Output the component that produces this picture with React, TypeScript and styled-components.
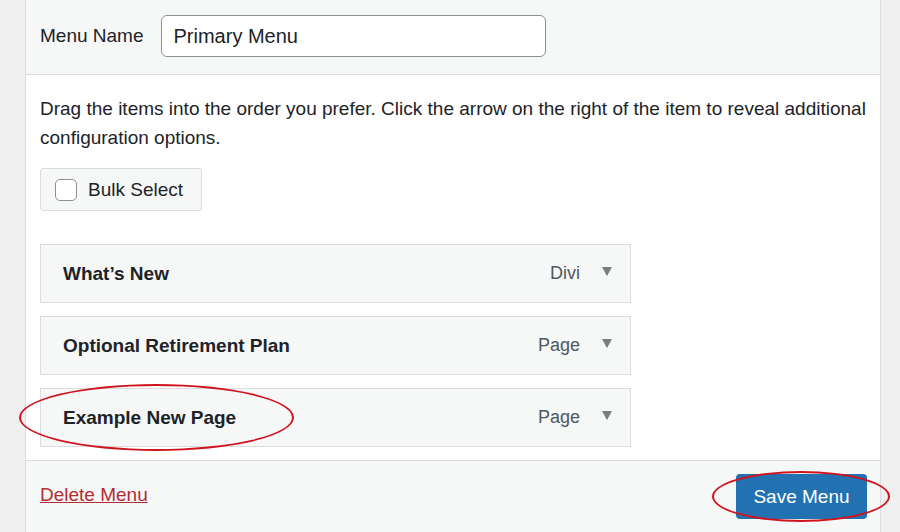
import React from 'react';
import styled, {createGlobalStyle} from 'styled-components';

const Global = createGlobalStyle`
	html, body { margin:0; background:#f0f0f1; }
	body { font-family:"Liberation Sans", Arial, sans-serif; color:#1d2327; }
`;

const Page = styled.div`
	width:900px;
	height:532px;
	overflow:hidden;
	padding:0 19px 0 25px;
	box-sizing:border-box;
`;

const Panel = styled.div`
	border:1px solid #dcdcde;
	border-top:none;
	background:#fff;
	height:100%;
	display:flex;
	flex-direction:column;
`;

const Header = styled.div`
	height:75px;
	box-sizing:border-box;
	background:#f6f7f7;
	border-bottom:1px solid #dcdcde;
	display:flex;
	align-items:center;
	gap:17px;
	padding:0 14px 2px;
	font-size:19px;
`;

const NameInput = styled.div`
	width:385px;
	height:42px;
	box-sizing:border-box;
	border:1px solid #8c8f94;
	border-radius:6px;
	background:#fff;
	display:flex;
	align-items:center;
	padding:0 12px;
	font-size:20px;
`;

const Body = styled.div`
	flex:1;
	padding:19px 14px 13px;
	display:flex;
	flex-direction:column;
`;

const Desc = styled.p`
	margin:0;
	font-size:19px;
	line-height:29px;
`;

const BulkButton = styled.div`
	margin-top:16px;
	width:162px;
	height:43px;
	box-sizing:border-box;
	border:1px solid #dcdcde;
	border-radius:3px;
	background:#f6f7f7;
	display:flex;
	align-items:center;
	gap:11px;
	padding:0 14px;
	font-size:19px;
`;

const Check = styled.span`
	width:22px;
	height:22px;
	box-sizing:border-box;
	border:1px solid #8c8f94;
	border-radius:5px;
	background:#fff;
`;

const List = styled.div`
	margin-top:33px;
	display:flex;
	flex-direction:column;
	gap:13px;
	width:591px;
`;

const Item = styled.div`
	height:59px;
	box-sizing:border-box;
	border:1px solid #dcdcde;
	background:#f6f7f7;
	display:flex;
	align-items:center;
	padding:0 18px 0 22px;
	font-size:19px;
`;

const Title = styled.span`
	flex:1;
	font-weight:700;
`;

const Type = styled.span`
	color:#50575e;
	font-size:18px;
	margin-right:22px;
`;

const Arrow = styled.span`
	width:0;
	height:0;
	border-left:5px solid transparent;
	border-right:5px solid transparent;
	border-top:9px solid #787c82;
	margin-top:-4px;
`;

const Footer = styled.div`
	height:72px;
	box-sizing:border-box;
	background:#f6f7f7;
	border-top:1px solid #dcdcde;
	display:flex;
	align-items:center;
	justify-content:space-between;
	padding:0 13px 0 14px;
`;

const DeleteLink = styled.a`
	color:#b32d2e;
	font-size:19px;
	text-decoration:underline;
	margin-top:-4px;
`;

const SaveButton = styled.div`
	background:#2271b1;
	color:#fff;
	border-radius:4px;
	height:45px;
	width:131px;
	display:flex;
	align-items:center;
	justify-content:center;
	font-size:19px;
	position:relative;
`;

const Wrap = styled.div`
	position:relative;
`;

const Ring = styled.span<{w:number; h:number; l:number; t:number}>`
	position:absolute;
	left:${p => p.l}px;
	top:${p => p.t}px;
	width:${p => p.w}px;
	height:${p => p.h}px;
	border:2px solid #d0141e;
	border-radius:50%;
	pointer-events:none;
`;

const items = [
	{title: 'What’s New', type: 'Divi'},
	{title: 'Optional Retirement Plan', type: 'Page'},
	{title: 'Example New Page', type: 'Page'},
];

export default function App() {
	return (
		<Page>
			<Global/>
			<Panel>
				<Header>
					<span>Menu Name</span>
					<NameInput>Primary Menu</NameInput>
				</Header>
				<Body>
					<Desc>Drag the items into the order you prefer. Click the arrow on the right of the item to reveal additional configuration options.</Desc>
					<BulkButton><Check/>Bulk Select</BulkButton>
					<List>
						{items.map((it, i) =>
							<Wrap key={it.title}>
								<Item>
									<Title>{it.title}</Title>
									<Type>{it.type}</Type>
									<Arrow/>
								</Item>
								{i === 2 && <Ring l={-21} t={-4} w={271} h={63}/>}
							</Wrap>
						)}
					</List>
				</Body>
				<Footer>
					<DeleteLink>Delete Menu</DeleteLink>
					<SaveButton>
						Save Menu
						<Ring l={-24} t={-3} w={174} h={47}/>
					</SaveButton>
				</Footer>
			</Panel>
		</Page>
	);
}
